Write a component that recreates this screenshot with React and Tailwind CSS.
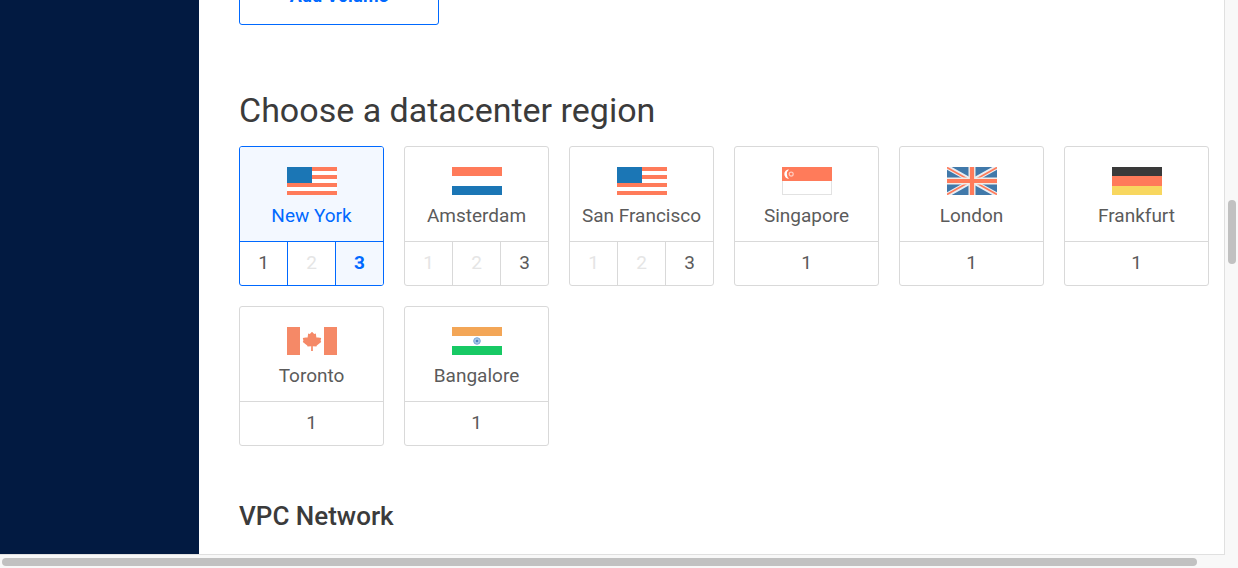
import React, { useState } from 'react';

const CORAL = '#ff7b5a';
const BLUE = '#1b76b5';

function Flag({ children }) {
  return (
    <svg viewBox="0 0 50 28" className="h-7 w-[50px]" aria-hidden="true">
      {children}
    </svg>
  );
}

function UsaFlag() {
  return (
    <Flag>
      <rect width="50" height="28" fill="#fff" />
      {[0, 8, 16, 24].map((y) => (
        <rect key={y} y={y} width="50" height="4" fill={CORAL} />
      ))}
      <rect width="25" height="16" fill={BLUE} />
    </Flag>
  );
}

function NetherlandsFlag() {
  return (
    <Flag>
      <rect width="50" height="9" fill={CORAL} />
      <rect y="19" width="50" height="9" fill={BLUE} />
    </Flag>
  );
}

function SingaporeFlag() {
  return (
    <Flag>
      <rect x="0.5" y="0.5" width="49" height="27" fill="#fff" stroke="#e2e2e2" />
      <rect width="50" height="14" fill={CORAL} />
      <path d="M7 2.4a4.7 4.7 0 1 0 0 9.4a6.2 6.2 0 0 1 0-9.4z" fill="#fff" />
      <circle cx="9.2" cy="7.1" r="2" fill="none" stroke="#fff" strokeOpacity="0.6" strokeWidth="1.2" />
    </Flag>
  );
}

function UkFlag() {
  return (
    <Flag>
      <rect width="50" height="28" fill="#4179aa" />
      <path d="M0 0L50 28M50 0L0 28" stroke="#e9eef3" strokeWidth="4.6" />
      <path d="M0 .5L25 14.5M50 27.5L25 13.5M50 .5L25 14.5M0 27.5L25 13.5" stroke={CORAL} strokeWidth="1.7" />
      <path d="M25 0V28M0 14H50" stroke="#f1ece9" strokeWidth="7" />
      <path d="M25 0V28M0 14H50" stroke={CORAL} strokeWidth="4.2" />
    </Flag>
  );
}

function GermanyFlag() {
  return (
    <Flag>
      <rect width="50" height="9" fill="#3a3a3a" />
      <rect y="9" width="50" height="10" fill={CORAL} />
      <rect y="19" width="50" height="9" fill="#f8d75f" />
    </Flag>
  );
}

function CanadaFlag() {
  return (
    <Flag>
      <rect width="13" height="28" fill="#f58967" />
      <rect x="37" width="13" height="28" fill="#f58967" />
      <path
        d="M25 4.8L27.2 7 28.8 6.6 29.4 10.6 31.2 10.4 34.2 11 33.6 13.6 34.2 15 29.8 18.4 29.4 19.6 25.8 19.2 25.9 24H24.1L24.2 19.2 20.6 19.6 20.2 18.4 15.8 15 16.4 13.6 15.8 11 18.8 10.4 20.6 10.6 21.2 6.6 22.8 7z"
        fill="#f58967"
      />
    </Flag>
  );
}

function IndiaFlag() {
  return (
    <Flag>
      <rect width="50" height="9" fill="#f3a657" />
      <rect y="19" width="50" height="9" fill="#17c964" />
      <circle cx="25" cy="14" r="3.3" fill="#a9c8e8" stroke="#7ba7d6" strokeWidth="1" />
      <circle cx="25" cy="14" r="1.3" fill="#4c82c0" />
    </Flag>
  );
}

const regions = [
  { name: 'New York', flag: UsaFlag, slots: [1, 2, 3], disabled: [2] },
  { name: 'Amsterdam', flag: NetherlandsFlag, slots: [1, 2, 3], disabled: [1, 2] },
  { name: 'San Francisco', flag: UsaFlag, slots: [1, 2, 3], disabled: [1, 2] },
  { name: 'Singapore', flag: SingaporeFlag, slots: [1], disabled: [] },
  { name: 'London', flag: UkFlag, slots: [1], disabled: [] },
  { name: 'Frankfurt', flag: GermanyFlag, slots: [1], disabled: [] },
  { name: 'Toronto', flag: CanadaFlag, slots: [1], disabled: [] },
  { name: 'Bangalore', flag: IndiaFlag, slots: [1], disabled: [] },
];

function RegionCard({ region, selected, onSelect }) {
  const FlagIcon = region.flag;
  const active = selected !== null;
  const line = active ? 'border-[#0069ff] divide-[#0069ff]' : 'border-[#d9d9d9] divide-[#d9d9d9]';
  return (
    <div
      role="group"
      aria-label={region.name}
      className={`w-[145px] overflow-hidden rounded-[3px] border ${line}`}
    >
      <div className={`flex flex-col items-center gap-2 pt-5 pb-3 ${active ? 'bg-[#f3f8ff] text-[#0069ff]' : 'text-[#5b5b5b]'}`}>
        <FlagIcon />
        <span className="text-[19px] leading-[26px] whitespace-nowrap">{region.name}</span>
      </div>
      <div className={`flex h-11 divide-x border-t ${line}`}>
        {region.slots.map((slot) => {
          const chosen = selected === slot;
          const off = region.disabled.includes(slot);
          const look = chosen
            ? 'bg-[#f3f8ff] font-bold text-[#0069ff]'
            : off
              ? 'text-[#e5e5e5]'
              : 'text-[#5b5b5b]';
          return (
            <button
              key={slot}
              type="button"
              disabled={off}
              aria-pressed={chosen}
              onClick={() => onSelect(region.name, slot)}
              className={`flex-1 pb-0.5 text-[19px] leading-6 ${look}`}
            >
              {slot}
            </button>
          );
        })}
      </div>
    </div>
  );
}

export default function App() {
  const [choice, setChoice] = useState({ name: 'New York', slot: 3 });
  return (
    <div className="flex h-screen flex-col overflow-hidden bg-[#f8f8f8] font-['Roboto','Liberation_Sans',sans-serif]">
      <div className="flex min-h-0 flex-1">
        <aside className="w-[199px] shrink-0 border-b border-[#e0e0e0] bg-[#021a41] bg-clip-padding" />
        <main className="min-w-0 flex-1 overflow-hidden border-r border-b border-[#e0e0e0] bg-white pr-3 pl-10">
          <button
            type="button"
            className="-mt-8 block h-[57px] w-[200px] rounded-[3px] border border-[#0069ff] pb-px text-[18px] leading-6 font-bold text-[#0069ff]"
          >
            Add Volume
          </button>
          <h2 className="mt-16 text-[34px] leading-[42px] font-normal text-[#3b3b3b]">
            Choose a datacenter region
          </h2>
          <div className="mt-[15px] flex flex-wrap gap-5">
            {regions.map((region) => (
              <RegionCard
                key={region.name}
                region={region}
                selected={choice.name === region.name ? choice.slot : null}
                onSelect={(name, slot) => setChoice({ name, slot })}
              />
            ))}
          </div>
          <h3 className="mt-[54px] text-[26px] leading-8 font-medium text-[#3b3b3b]">VPC Network</h3>
        </main>
        <div className="w-[13px] shrink-0 pl-[3px]">
          <div className="mt-[200px] h-16 w-2 rounded-full bg-[#c1c1c1]" />
        </div>
      </div>
      <div className="h-[13px] shrink-0 pt-[3px] pr-[41px] pl-0.5">
        <div className="h-2 rounded-full bg-[#c1c1c1]" />
      </div>
    </div>
  );
}
